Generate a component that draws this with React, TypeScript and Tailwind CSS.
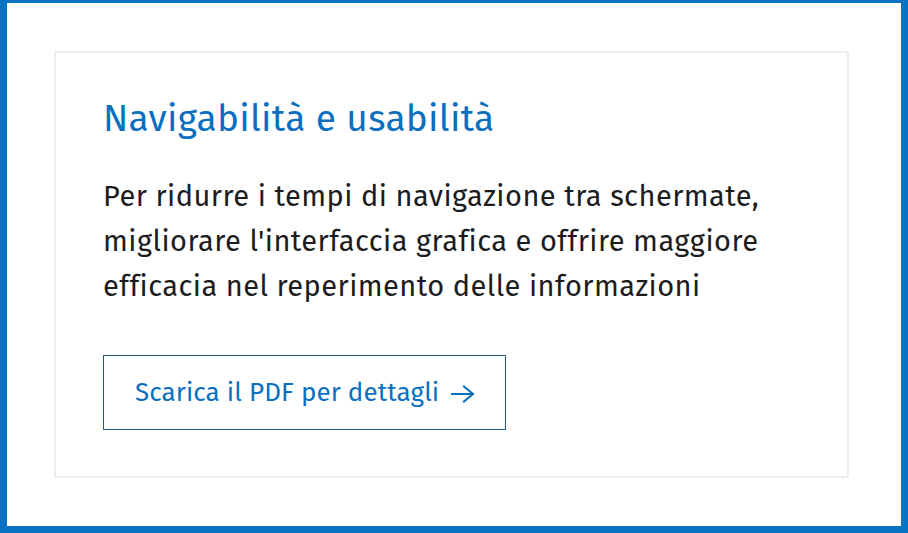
import React from "react";

function Arrow() {
  return (
    <svg
      width="24"
      height="18"
      viewBox="0 0 24 18"
      fill="none"
      stroke="currentColor"
      strokeWidth="2"
      strokeLinecap="square"
      strokeLinejoin="miter"
      className="shrink-0"
    >
      <path d="M1 9 H22" />
      <path d="M13 1.5 L22 9 L13 16.5" />
    </svg>
  );
}

export default function App() {
  return (
    <div className="w-[908px] h-[533px] bg-white box-border border-solid border-[#0a72c2] border-t-[3px] border-l-[7px] border-r-[7px] border-b-[7px] pl-[47px] pt-[48px] font-['Fira_Sans','Open_Sans',sans-serif]">
      <div className="box-border w-[795px] h-[427px] border-2 border-[#efedf2] pl-[47px] pt-[44px]">
        <h2 className="text-[37px] leading-[44px] tracking-[0.3px] text-[#0b6fbf] font-normal">
          Navigabilità e usabilità
        </h2>
        <p className="mt-[33px] text-[29px] leading-[45px] tracking-[0.45px] text-[#1c1c1e]">
          Per ridurre i tempi di navigazione tra schermate,
          <br />
          migliorare l'interfaccia grafica e offrire maggiore
          <br />
          efficacia nel reperimento delle informazioni
        </p>
        <a
          href="#"
          className="mt-[46px] box-border flex w-[403px] h-[75px] items-start gap-[12px] border border-[#24598a] pl-[31px] pt-[20px] text-[26px] leading-[34px] tracking-[0.1px] text-[#0b6fbf] no-underline"
        >
          <span>Scarica il PDF per dettagli</span>
          <span className="flex h-[34px] items-center pt-[1px]">
            <Arrow />
          </span>
        </a>
      </div>
    </div>
  );
}
